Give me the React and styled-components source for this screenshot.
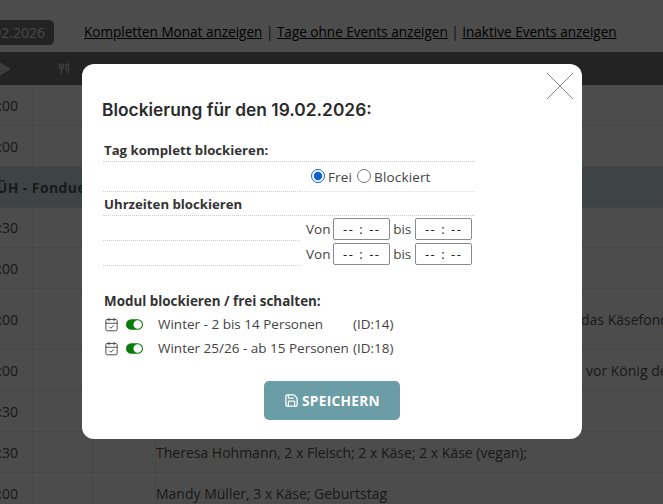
import React from "react";
import styled, { createGlobalStyle } from "styled-components";
import { BsToggleOn, BsPlayFill } from "react-icons/bs";
import { LuSave, LuUtensils, LuCalendarCheck } from "react-icons/lu";

const GlobalStyle = createGlobalStyle`
  html, body {
    margin: 0;
    padding: 0;
    height: 100%;
    overflow: hidden;
  }
  body {
    font-family: "Open Sans", "Liberation Sans", sans-serif;
    color: #333;
    background: #fff;
  }
`;

const Page = styled.div`
  position: relative;
  width: 663px;
  height: 504px;
  overflow: hidden;
`;

const TopBar = styled.div`
  display: flex;
  align-items: center;
  height: 52px;
  padding-top: 12px;
  box-sizing: border-box;
`;

const DatePill = styled.div`
  width: 54px;
  height: 25px;
  margin-right: 30px;
  background: #777;
  color: #eee;
  border-radius: 0 5px 5px 0;
  font-size: 14px;
  line-height: 25px;
  padding-right: 9px;
  box-sizing: border-box;
  white-space: nowrap;
  overflow: hidden;
  display: flex;
  justify-content: flex-end;
`;

const Links = styled.div`
  font-size: 13.55px;
  color: #333;
  white-space: nowrap;
  a {
    color: #000;
    text-decoration: underline;
  }
`;

const TableHead = styled.div`
  display: flex;
  align-items: center;
  height: 33px;
  background: #757575;
  color: #ccc;
  font-size: 14px;
`;

const PlayIcon = styled(BsPlayFill)`
  font-size: 24px;
  margin-left: -8px;
  margin-right: 42px;
`;

const ForkIcon = styled(LuUtensils)`
  font-size: 12px;
  stroke-width: 2.6;
`;

const Row = styled.div`
  display: flex;
  align-items: stretch;
  height: ${(props) => props.$h}px;
  box-sizing: border-box;
  border-bottom: 1px solid #e6e6e6;
  background: ${(props) => (props.$band ? "#cfe3e6" : "#fff")};
  font-size: 14px;
  color: #555;
  white-space: nowrap;
`;

const TimeCell = styled.div`
  width: 33px;
  flex: none;
  box-sizing: border-box;
  padding-right: 14px;
  border-right: 1px solid #eee;
  display: flex;
  align-items: center;
  justify-content: flex-end;
  overflow: hidden;
`;

const SpacerCell = styled.div`
  width: ${(props) => props.$w}px;
  flex: none;
  border-right: 1px solid #eee;
`;

const BandLabel = styled.div`
  display: flex;
  align-items: center;
  font-weight: 700;
  margin-left: -21px;
  letter-spacing: 0.4px;
`;

const Note = styled.div`
  display: flex;
  align-items: center;
  padding-left: ${(props) => props.$indent || 0}px;
`;

const Overlay = styled.div`
  position: absolute;
  inset: 0;
  background: rgba(0, 0, 0, 0.7);
  display: flex;
  justify-content: center;
  align-items: flex-start;
  padding: 64px 0 0 1px;
  box-sizing: border-box;
`;

const Modal = styled.div`
  position: relative;
  width: 500px;
  height: 375px;
  background: #fff;
  border-radius: 12px;
  padding: 34px 20px 0 20px;
  box-sizing: border-box;
`;

const CloseX = styled.svg`
  position: absolute;
  top: 9px;
  right: 9px;
  width: 26px;
  height: 26px;
  stroke: #666;
  stroke-width: 0.8;
`;

const Title = styled.h2`
  margin: 0;
  font-family: "Inter", sans-serif;
  font-size: 17.35px;
  line-height: 24px;
  font-weight: 600;
  color: #2b2b2b;
`;

const Form = styled.div`
  width: 372px;
  margin: 16px 0 0 1px;
  display: grid;
  grid-template-columns: 197px 175px;
`;

const SectionHead = styled.div`
  grid-column: 1 / 3;
  height: ${(props) => props.$h}px;
  padding-left: 1px;
  box-sizing: border-box;
  display: flex;
  align-items: flex-end;
  padding-bottom: 2px;
  font-size: 13.2px;
  font-weight: 700;
  color: #333;
  border-bottom: 1px dotted #ccc;
`;

const BlankCell = styled.div`
  border-bottom: 1px dotted #ccc;
`;

const FieldCell = styled.div`
  display: flex;
  align-items: center;
  height: ${(props) => props.$h}px;
  font-size: 13.5px;
  color: #444;
  white-space: nowrap;
`;

const RadioRow = styled(FieldCell)`
  padding-left: 11px;
  gap: 3px;
  box-sizing: border-box;
  border-bottom: 1px dotted #ddd;
`;

const Radio = styled.input`
  width: 14px;
  height: 14px;
  margin: 0 0 2px 0;
  accent-color: #0d62d0;
`;

const RadioLabel = styled.span`
  margin-right: 2px;
  letter-spacing: 0.15px;
`;

const TimeBox = styled.div`
  width: 57px;
  height: 22px;
  box-sizing: border-box;
  border: 1px solid #8a8a8a;
  border-radius: 2px;
  font-size: 13px;
  line-height: 20px;
  text-align: center;
  letter-spacing: 1.5px;
  color: #222;
  margin: 0 3px 0 ${(props) => props.$ml || 3}px;
`;

const FieldLabel = styled.span`
  margin-left: ${(props) => props.$ml || 0}px;
`;

const ModuleBlock = styled.div`
  margin: 26px 0 0 2px;
`;

const ModuleHead = styled.div`
  font-size: 13.4px;
  font-weight: 700;
  color: #333;
  line-height: 18px;
`;

const ModuleList = styled.div`
  margin-top: 4px;
  display: flex;
  flex-direction: column;
  gap: 4px;
`;

const ModuleRow = styled.div`
  display: flex;
  align-items: center;
  height: 20px;
  font-size: 13.5px;
  color: #444;
  white-space: nowrap;
`;

const CalIcon = styled(LuCalendarCheck)`
  font-size: 15px;
  stroke-width: 1.5;
  color: #444;
  margin-right: 7px;
`;

const ToggleIcon = styled(BsToggleOn)`
  font-size: 17px;
  color: #087c08;
  margin-right: 15px;
`;

const ModuleName = styled.span`
  width: 195px;
`;

const SaveRow = styled.div`
  display: flex;
  justify-content: center;
  margin-top: 23px;
`;

const SaveButton = styled.button`
  display: flex;
  align-items: center;
  justify-content: center;
  gap: 3px;
  width: 136px;
  height: 39px;
  border: 0;
  border-radius: 5px;
  background: #6b9da6;
  color: #fff;
  font-family: "Open Sans", sans-serif;
  font-size: 13.7px;
  font-weight: 700;
  letter-spacing: 0.3px;
`;

const rows = [
  { h: 41, time: "18:00" },
  { h: 41, time: "18:00" },
  { h: 41, band: true },
  { h: 40, time: "18:30" },
  { h: 41, time: "19:00" },
  { h: 61, time: "19:00", note: "das Käsefondue", indent: 425 },
  { h: 41, time: "19:00", note: "vor König der", indent: 430 },
  { h: 41, time: "19:30" },
  { h: 41, time: "19:30", note: "Theresa Hohmann, 2 x Fleisch; 2 x Käse; 2 x Käse (vegan);" },
  { h: 41, time: "20:00", note: "Mandy Müller, 3 x Käse; Geburtstag" },
];

const TimeRow = ({ h }) => (
  <>
    <BlankCell />
    <FieldCell $h={h}>
      <FieldLabel $ml={6}>Von</FieldLabel>
      <TimeBox>-- : --</TimeBox>
      <FieldLabel>bis</FieldLabel>
      <TimeBox $ml={4}>-- : --</TimeBox>
    </FieldCell>
  </>
);

const App = () => {
  return (
    <Page>
      <GlobalStyle />
      <TopBar>
        <DatePill>19.02.2026</DatePill>
        <Links>
          <a href="#m">Kompletten Monat anzeigen</a> | <a href="#t">Tage ohne Events anzeigen</a> |{" "}
          <a href="#i">Inaktive Events anzeigen</a>
        </Links>
      </TopBar>
      <TableHead>
        <PlayIcon />
        <ForkIcon />
      </TableHead>
      {rows.map((row, i) => (
        <Row key={i} $h={row.h} $band={row.band}>
          {row.band ? (
            <BandLabel>FRÜH - Fondue</BandLabel>
          ) : (
            <>
              <TimeCell>{row.time}</TimeCell>
              <SpacerCell $w={59} />
              <SpacerCell $w={62} />
              <Note $indent={row.indent}>{row.note}</Note>
            </>
          )}
        </Row>
      ))}
      <Overlay>
        <Modal>
          <CloseX viewBox="0 0 26 26">
            <path d="M0 0L26 26M26 0L0 26" />
          </CloseX>
          <Title>Blockierung für den 19.02.2026:</Title>
          <Form>
            <SectionHead $h={24}>Tag komplett blockieren:</SectionHead>
            <BlankCell />
            <RadioRow $h={30}>
              <Radio type="radio" name="day" defaultChecked />
              <RadioLabel>Frei</RadioLabel>
              <Radio type="radio" name="day" />
              <RadioLabel>Blockiert</RadioLabel>
            </RadioRow>
            <SectionHead $h={24}>Uhrzeiten blockieren</SectionHead>
            <TimeRow h={25} />
            <TimeRow h={25} />
          </Form>
          <ModuleBlock>
            <ModuleHead>Modul blockieren / frei schalten:</ModuleHead>
            <ModuleList>
              <ModuleRow>
                <CalIcon />
                <ToggleIcon />
                <ModuleName>Winter - 2 bis 14 Personen</ModuleName>
                <span>(ID:14)</span>
              </ModuleRow>
              <ModuleRow>
                <CalIcon />
                <ToggleIcon />
                <ModuleName>Winter 25/26 - ab 15 Personen</ModuleName>
                <span>(ID:18)</span>
              </ModuleRow>
            </ModuleList>
          </ModuleBlock>
          <SaveRow>
            <SaveButton>
              <LuSave size={15} />
              SPEICHERN
            </SaveButton>
          </SaveRow>
        </Modal>
      </Overlay>
    </Page>
  );
};

export default App;
